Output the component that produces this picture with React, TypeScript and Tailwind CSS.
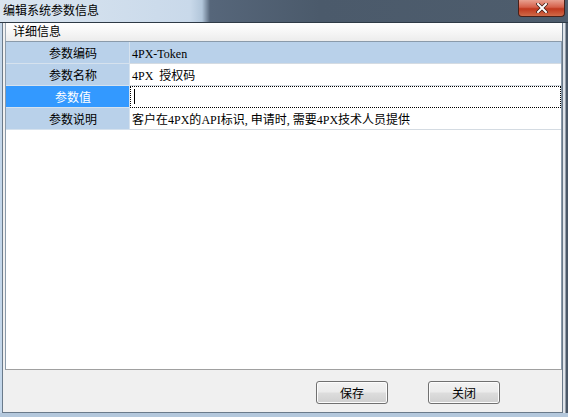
import React from 'react';

const cjk = { fontFamily: '"Noto Sans CJK SC", "Noto Sans", sans-serif' };
const latin = { fontFamily: '"Liberation Serif", serif' };

// SimSun-like look: ascii runs in a serif face, CJK in Noto
const Mixed = ({ text }: { text: string }) => {
  const parts = text.match(/[\x20-\x7e]+|[^\x20-\x7e]+/g) || [];
  return (
    <>
      {parts.map((p, i) =>
        /^[\x20-\x7e]+$/.test(p) ? (
          <span key={i} style={latin} className="text-[12px] whitespace-pre">
            {p}
          </span>
        ) : (
          <span key={i} style={cjk} className="text-[12px]">
            {p}
          </span>
        )
      )}
    </>
  );
};

const rows = [
  { label: '参数编码', value: '4PX-Token' },
  { label: '参数名称', value: '4PX  授权码' },
  { label: '参数值', value: '' },
  { label: '参数说明', value: '客户在4PX的API标识, 申请时, 需要4PX技术人员提供' },
];

const Button = ({ children }: { children: React.ReactNode }) => (
  <button
    style={cjk}
    className="w-[72px] h-[23px] rounded-[3px] border border-[#707070] bg-[linear-gradient(#f2f2f2_0%,#ebebeb_48%,#dddddd_52%,#cfcfcf_100%)] shadow-[inset_0_0_0_1px_#fcfcfc] text-[12px] leading-[20px] text-black"
  >
    {children}
  </button>
);

export default function App() {
  return (
    <div className="w-[568px] h-[417px] flex flex-col overflow-hidden bg-[#c4d7ea]">
      {/* Title bar */}
      <div className="relative h-[23px] shrink-0 bg-[linear-gradient(to_right,#dae5f0_0px,#c9d9ea_190px,#b2c6da_202px,#56667a_210px,#4b5a6b_320px,#4e5d6d_100%)] border-b border-[#2e3a46]">
        <div style={cjk} className="pl-[3px] pt-[2px] text-[12px] leading-[16px] text-black">
          编辑系统参数信息
        </div>
        <div className="absolute right-[3px] top-0 w-[47px] h-[17px] rounded-b-[4px] border border-t-0 border-[#4a2018] bg-[linear-gradient(#e8a090_0%,#d5604a_45%,#c0381e_55%,#d06a48_100%)] flex items-center justify-center">
          <svg width="12" height="10" viewBox="0 0 12 10">
            <path d="M2 1 L10 9 M10 1 L2 9" stroke="#3a1a14" strokeWidth="3.4" strokeLinecap="square" />
            <path d="M2 1 L10 9 M10 1 L2 9" stroke="#ffffff" strokeWidth="2" strokeLinecap="square" />
          </svg>
        </div>
      </div>

      {/* Body */}
      <div className="flex flex-1 min-h-0">
        <div className="w-[2px] shrink-0 bg-[#c4d7ea]" />
        <div className="flex-1 flex flex-col border-l border-r border-b border-[#6a7a8a] bg-[#f0f0f0]">
          {/* group caption */}
          <div
            style={cjk}
            className="h-[18px] shrink-0 pl-[7px] pt-[1px] text-[12px] leading-[14px] text-black bg-[linear-gradient(#ffffff_0%,#fafafa_30%,#ececec_100%)] border-l border-[#9aa6b2] ml-[2px]"
          >
            详细信息
          </div>

          {/* property grid */}
          <div className="ml-[2px] h-[329px] shrink-0 border border-[#8a9aaa] border-b-[#a0a0a0] bg-white">
            {rows.map((r, i) => {
              const focused = i === 2;
              const selected = i === 0;
              return (
                <div key={r.label} className="flex h-[22px]">
                  <div
                    style={cjk}
                    className={`w-[124px] shrink-0 pl-[11px] text-center text-[12px] leading-[21px] border-b border-r border-[#d6e2ee] ${
                      focused ? 'bg-[#3399ff] text-white' : 'bg-[#b9d1ea] text-black'
                    }`}
                  >
                    {r.label}
                  </div>
                  <div
                    className={`flex-1 min-w-0 pl-[2px] leading-[21px] text-black border-b border-[#d4dbe2] ${
                      selected ? 'bg-[#b9d1ea]' : 'bg-white'
                    } ${focused ? 'border border-dotted border-black' : ''}`}
                  >
                    {focused ? (
                      <div className="w-px h-[15px] bg-black mt-[2px] ml-[1px]" />
                    ) : (
                      <Mixed text={r.value} />
                    )}
                  </div>
                </div>
              );
            })}
          </div>

          {/* buttons */}
          <div className="flex-1 flex justify-end items-start pt-[11px] pr-[62px] gap-[40px]">
            <Button>保存</Button>
            <Button>关闭</Button>
          </div>
        </div>
        <div className="w-[5px] shrink-0 bg-[linear-gradient(to_right,#dfe4ea_0px,#dfe4ea_2px,#4a5868_3px,#4a5868_100%)]" />
      </div>
      <div className="h-[4px] shrink-0 bg-[#b4c8dc]" />
    </div>
  );
}
